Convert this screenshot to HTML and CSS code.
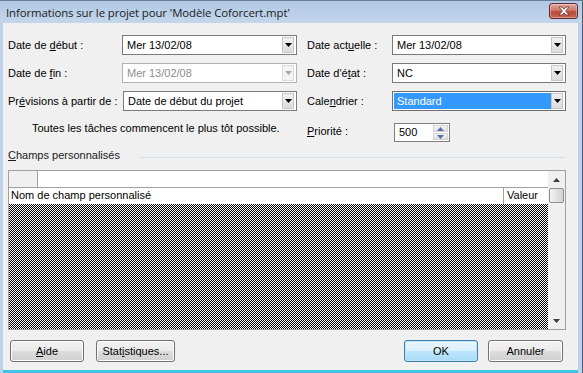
FILE: index.html
```html
<!DOCTYPE html>
<html lang="fr">
<head>
<meta charset="utf-8">
<title>Informations sur le projet</title>
<link rel="stylesheet" href="styles.css">
</head>
<body>
<div class="window">
  <div class="titlebar">
    <span class="title">Informations sur le projet pour 'Modèle Coforcert.mpt'</span>
    <button class="close" aria-label="Fermer">
      <svg width="14" height="10" viewBox="0 0 14 10"><path d="M2 1 L5 1 L7 3.2 L9 1 L12 1 L8.6 5 L12 9 L9 9 L7 6.8 L5 9 L2 9 L5.4 5 Z" fill="#fff" stroke="#6b3030" stroke-width="0.8"/></svg>
    </button>
  </div>
  <div class="client">
    <div class="form">
      <label class="lbl">Date de <u>d</u>ébut :</label>
      <div class="combo"><span class="val">Mer 13/02/08</span><span class="arrow"><svg width="7" height="4" viewBox="0 0 7 4"><path d="M0 0H7L3.5 4Z"/></svg></span></div>
      <label class="lbl rl">Date act<u>u</u>elle :</label>
      <div class="combo"><span class="val">Mer 13/02/08</span><span class="arrow"><svg width="7" height="4" viewBox="0 0 7 4"><path d="M0 0H7L3.5 4Z"/></svg></span></div>

      <label class="lbl">Date de <u>f</u>in :</label>
      <div class="combo disabled"><span class="val">Mer 13/02/08</span><span class="arrow"><svg width="7" height="4" viewBox="0 0 7 4"><path d="M0 0H7L3.5 4Z"/></svg></span></div>
      <label class="lbl rl">Date d'é<u>t</u>at :</label>
      <div class="combo"><span class="val">NC</span><span class="arrow"><svg width="7" height="4" viewBox="0 0 7 4"><path d="M0 0H7L3.5 4Z"/></svg></span></div>

      <label class="lbl">Pr<u>é</u>visions à partir de :</label>
      <div class="combo shift"><span class="val">Date de début du projet</span><span class="arrow"><svg width="7" height="4" viewBox="0 0 7 4"><path d="M0 0H7L3.5 4Z"/></svg></span></div>
      <label class="lbl rl">Cale<u>n</u>drier :</label>
      <div class="combo selected"><span class="val">Standard</span><span class="arrow"><svg width="7" height="4" viewBox="0 0 7 4"><path d="M0 0H7L3.5 4Z"/></svg></span></div>

      <p class="note">Toutes les tâches commencent le plus tôt possible.</p>
      <label class="lbl rl prio"><u>P</u>riorité :</label>
      <div class="spin">
        <span class="val">500</span>
        <span class="spinbtns">
          <span class="sb"><svg width="7" height="4" viewBox="0 0 7 4"><path d="M0 4H7L3.5 0Z"/></svg></span>
          <span class="sb"><svg width="7" height="4" viewBox="0 0 7 4"><path d="M0 0H7L3.5 4Z"/></svg></span>
        </span>
      </div>
    </div>

    <div class="group">
      <span class="gtitle"><u>C</u>hamps personnalisés</span>
      <span class="gline"></span>
    </div>

    <div class="grid">
      <div class="gmain">
        <div class="editrow"><span class="corner"></span><span class="editcell"></span></div>
        <div class="headrow"><span class="hname">Nom de champ personnalisé</span><span class="hval">Valeur</span></div>
        <div class="hatch"></div>
      </div>
      <div class="vscroll">
        <span class="sarrow"><svg width="7" height="4" viewBox="0 0 7 4"><path d="M0 4H7L3.5 0Z"/></svg></span>
        <span class="thumb"></span>
        <span class="strack"></span>
        <span class="sarrow"><svg width="7" height="4" viewBox="0 0 7 4"><path d="M0 0H7L3.5 4Z"/></svg></span>
      </div>
    </div>

    <div class="buttons">
      <div class="bleft">
        <button class="btn w74"><u>A</u>ide</button>
        <button class="btn w79">Stat<u>i</u>stiques...</button>
      </div>
      <div class="bright">
        <button class="btn w74 default">OK</button>
        <button class="btn w75">Annuler</button>
      </div>
    </div>
  </div>
</div>
</body>
</html>
```

FILE: styles.css
```css
* { box-sizing: border-box; }
html, body { margin: 0; padding: 0; }
body {
  width: 583px;
  height: 373px;
  overflow: hidden;
  font-family: "Liberation Sans", Arial, sans-serif;
  font-size: 11px;
  color: #000;
  background: #bcd1ea;
}
u { text-decoration: underline; text-underline-offset: 1px; }

.window {
  width: 583px;
  height: 373px;
  display: flex;
  flex-direction: column;
  border-top: 1px solid #6a7f99;
  border-right: 1px solid #4f5b6a;
  background: #bcd1ea;
}

.titlebar {
  height: 22px;
  flex: none;
  display: flex;
  align-items: center;
  justify-content: space-between;
  padding: 0 4px 0 6px;
  background: linear-gradient(#b4c9e3, #b9cee7 50%, #c3d6ec);
}
.title {
  font-family: "Open Sans", "Noto Sans", sans-serif;
  font-size: 11.4px;
  color: #1b1b1b;
  letter-spacing: -0.1px;
  padding-top: 1px;
}
.close {
  width: 29px;
  height: 16px;
  margin-top: -2px;
  border: 1px solid #5a2a30;
  border-radius: 3px;
  padding: 0;
  display: flex;
  align-items: center;
  justify-content: center;
  background: linear-gradient(#e0a89e, #d0796a 45%, #b84a38 55%, #c7664f);
  box-shadow: inset 0 0 0 1px rgba(255,255,255,0.35);
}

.client {
  flex: 1;
  margin: 0 4px 3px 3px;
  background: #f0f0f0;
  display: flex;
  flex-direction: column;
  padding: 12px 0 0 5px;
  border-bottom: 3px solid #f0f0f0;
  box-shadow: 0 3px 0 #3ec3e6;
}

.form {
  display: grid;
  grid-template-columns: 114px 175px 95px 174px;
  row-gap: 8px;
  grid-auto-rows: 20px;
}
.form .lbl { align-self: center; white-space: nowrap; }
.form .rl { padding-left: 10px; }
.combo {
  display: flex;
  align-items: stretch;
  border: 1px solid #7a7a7a;
  background: #fff;
  padding: 1px;
}
.combo.shift { margin-left: 1px; }
.combo .val {
  flex: 1;
  padding: 0 3px;
  line-height: 16px;
  white-space: nowrap;
  overflow: hidden;
}
.combo .arrow {
  width: 12px;
  display: flex;
  align-items: center;
  justify-content: center;
  background: linear-gradient(#f0f0f0, #dcdcdc);
  border: 1px solid #c6c6c6;
  margin: 0 1px 0 0;
}
.combo .arrow svg { fill: #000; }
.combo.disabled { border-color: #adb2b5; }
.combo.disabled .val { color: #8d8d8d; }
.combo.disabled .arrow { background: #f4f4f4; border-color: #dadada; }
.combo.disabled .arrow svg { fill: #a8a8a8; }
.combo.selected .val { background: #3399ff; color: #fff; }
.combo.selected { border-color: #6f6f6f; }

.note {
  grid-column: 1 / span 2;
  margin: 2px 0 0;
  padding-left: 24px;
  align-self: start;
  line-height: 14px;
}
.form .prio { align-self: start; margin-top: 5px; line-height: 14px; }
.spin {
  margin-top: 4px;
  margin-left: 2px;
  width: 56px;
  height: 19px;
  display: flex;
  border: 1px solid #808080;
  background: #fff;
}
.spin .val { flex: 1; padding: 0 4px; line-height: 16px; }
.spinbtns {
  width: 16px;
  display: flex;
  flex-direction: column;
  padding: 1px 1px 1px 0;
  gap: 1px;
}
.sb {
  flex: 1;
  display: flex;
  align-items: center;
  justify-content: center;
  background: linear-gradient(#f4f4f4, #dedede);
  border: 1px solid #d2d2d2;
}
.sb svg { fill: #5a6ea8; }

.group {
  display: flex;
  align-items: center;
  margin-top: 9px;
  height: 14px;
}
.gtitle { white-space: nowrap; color: #1a1a1a; }
.gline {
  flex: none;
  width: 427px;
  height: 1px;
  background: #d4dfe8;
  margin-left: 19px;
  margin-top: 5px;
}

.grid {
  margin-top: 8px;
  width: 558px;
  height: 160px;
  border: 1px solid #a0a0a0;
  display: flex;
  background: #f0f0f0;
}
.gmain {
  flex: 1;
  display: flex;
  flex-direction: column;
}
.editrow {
  height: 17px;
  display: flex;
  border-bottom: 1px solid #a0a0a0;
}
.corner {
  width: 29px;
  background: #f0f0f0;
  border-right: 1px solid #a0a0a0;
}
.editcell { flex: 1; background: #fff; }
.headrow {
  height: 16px;
  display: flex;
  background: #fff;
  line-height: 15px;
}
.hname {
  flex: none;
  width: 495px;
  padding-left: 2px;
  border-right: 1px solid #a0a0a0;
}
.hval { padding-left: 3px; }
.hatch {
  flex: 1;
  background-image:
    repeating-linear-gradient(90deg, #fff 0 1px, #000 1px 2px),
    repeating-linear-gradient(0deg, #fff 0 1px, #000 1px 2px);
  background-blend-mode: difference;
}
.vscroll {
  width: 17px;
  display: flex;
  flex-direction: column;
  align-items: center;
  background: #f0f0f0;
}
.sarrow {
  height: 17px;
  width: 15px;
  display: flex;
  align-items: center;
  justify-content: center;
}
.sarrow svg { fill: #3c3c3c; }
.thumb {
  width: 15px;
  height: 15px;
  border: 1px solid #8e8f8f;
  border-radius: 2px;
  background: linear-gradient(90deg, #f3f3f3, #e2e2e2 50%, #d2d2d2);
}
.strack { flex: 1; }

.buttons {
  margin-top: 10px;
  display: flex;
  justify-content: space-between;
  padding: 0 15px 0 2px;
}
.bleft, .bright { display: flex; gap: 12px; }
.bright { gap: 10px; }
.btn {
  height: 22px;
  font-family: "Liberation Sans", Arial, sans-serif;
  font-size: 11px;
  color: #000;
  border: 1px solid #707070;
  border-radius: 3px;
  background: linear-gradient(#f2f2f2, #ebebeb 49%, #dddddd 51%, #cfcfcf);
  box-shadow: inset 0 0 0 1px #fcfcfc;
  padding: 0;
}
.btn.default {
  border-color: #3c7fb1;
  background: linear-gradient(#eaf6fd, #d9f0fc 49%, #bee6fd 51%, #a7d9f5);
  box-shadow: inset 0 0 0 1px #bfe3f8;
}
.w74 { width: 74px; }
.w75 { width: 75px; }
.w79 { width: 79px; }
```
